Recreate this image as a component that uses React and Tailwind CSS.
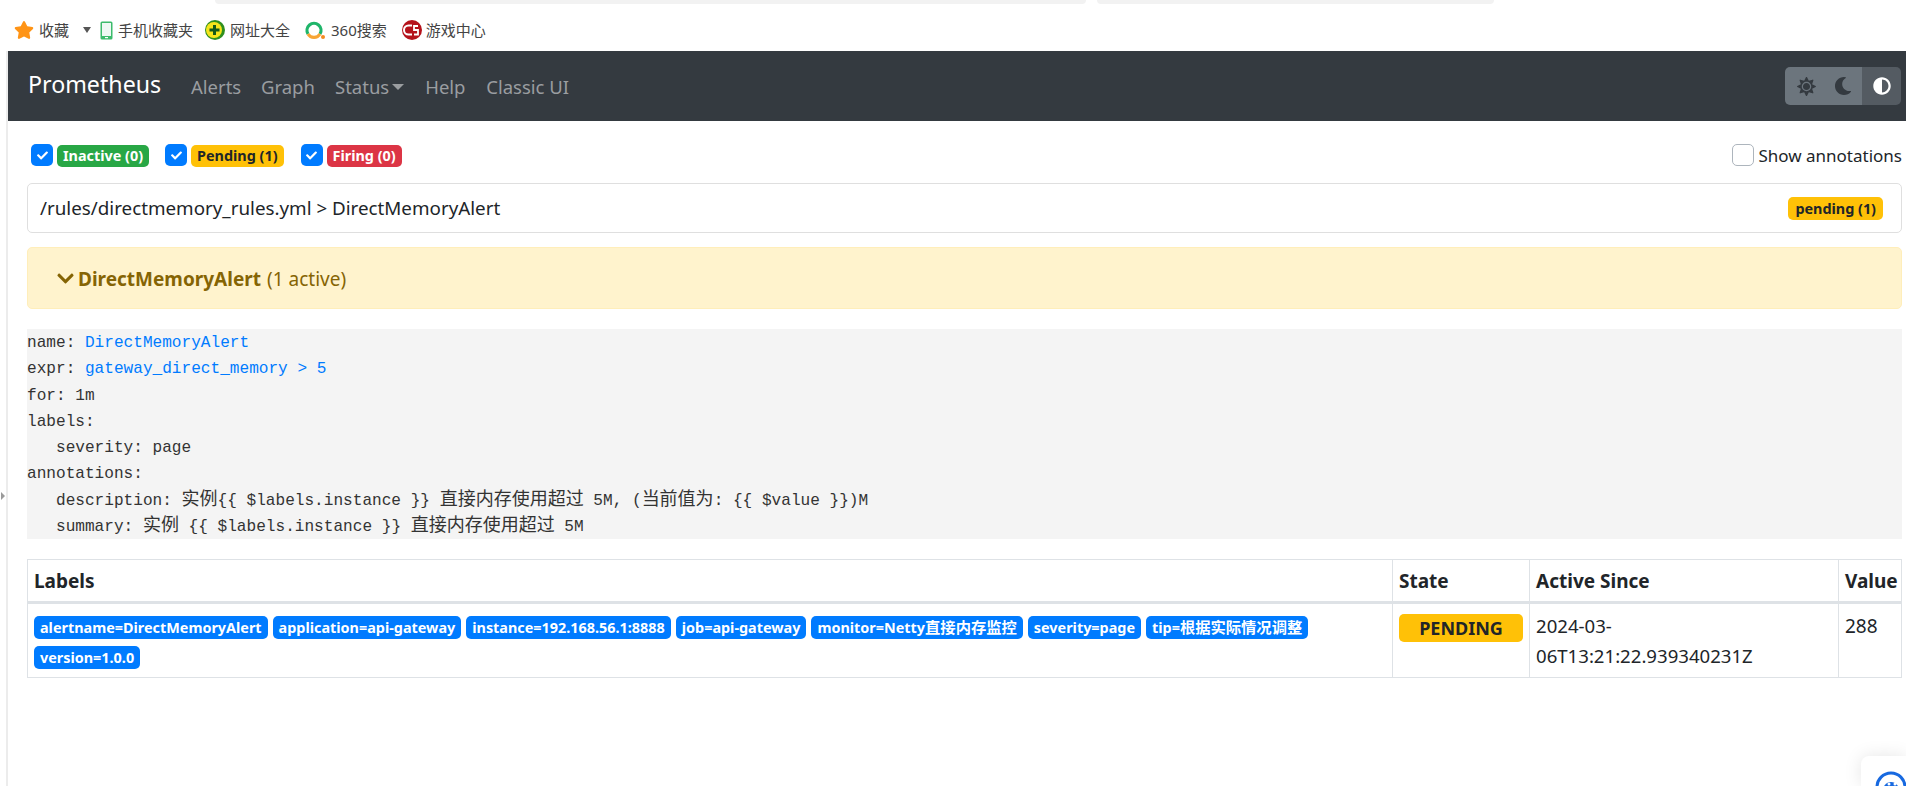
import React from 'react';
import { FaSun, FaMoon, FaAdjust, FaChevronDown, FaStar, FaCheck } from 'react-icons/fa';

const cjk = { fontFamily: '"Noto Sans", "Noto Sans CJK SC", sans-serif' };

const labels = [
  { text: 'alertname=DirectMemoryAlert' },
  { text: 'application=api-gateway' },
  { text: 'instance=192.168.56.1:8888' },
  { text: 'job=api-gateway' },
  { text: 'monitor=Netty', zh: '直接内存监控' },
  { text: 'severity=page' },
  { text: 'tip=', zh: '根据实际情况调整' },
  { text: 'version=1.0.0' },
];

function Zh({ children }) {
  return <span className="text-[18px] leading-[0] font-['Noto_Sans_CJK_SC']">{children}</span>;
}

function Bookmark({ icon, text, className }) {
  return (
    <div className={`flex items-center ${className}`}>
      {icon}
      <span className="text-[15px] text-[#444] leading-none">{text}</span>
    </div>
  );
}

function FilterCheck({ badgeClass, text, className }) {
  return (
    <div className={`flex items-start ${className}`}>
      <span className="w-[22px] h-[22px] rounded-[5px] bg-[#007bff] flex items-center justify-center text-white">
        <FaCheck className="w-[11px] h-[11px]" />
      </span>
      <span className={`ml-[4px] mt-[1px] h-[22px] px-[6px] rounded-[5px] text-[14.400px] font-bold leading-[22px] ${badgeClass}`}>{text}</span>
    </div>
  );
}

export default function App() {
  return (
    <div className="h-[786px] overflow-hidden bg-white flex flex-col text-[#212529] relative" style={cjk}>
      {/* browser chrome */}
      <div className="h-[51px] shrink-0 relative">
        <div className="flex h-[4px]">
          <div className="ml-[215px] w-[871px] bg-[#f2f2f2] rounded-b-[6px]" />
          <div className="ml-[11px] w-[397px] bg-[#f2f2f2] rounded-b-[6px]" />
        </div>
        <div className="flex items-center h-[22px] mt-[15px]">
          <Bookmark
            className="ml-[14px] w-[69px]"
            icon={<FaStar className="w-[20px] h-[20px] text-[#ff9416] mr-[5px]" />}
            text="收藏"
          />
          <div className="w-0 h-0 border-x-[4px] border-x-transparent border-t-[6px] border-t-[#555]" />
          <Bookmark
            className="ml-[9px]"
            icon={
              <svg width="13" height="19" viewBox="0 0 13 19" className="mr-[5px]">
                <rect x="0.5" y="0.5" width="12" height="18" rx="1.5" fill="#3dbb6c" />
                <rect x="2" y="2" width="9" height="13" fill="#eef8f3" />
                <rect x="5" y="16" width="3" height="1.2" fill="#fff" />
              </svg>
            }
            text="手机收藏夹"
          />
          <Bookmark
            className="ml-[12px]"
            icon={
              <svg width="20" height="20" viewBox="0 0 20 20" className="mr-[5px]">
                <circle cx="10" cy="10" r="10" fill="#2f8f1f" />
                <circle cx="9" cy="10" r="8" fill="#f5e51b" />
                <path d="M8 5h3v3.500h3.500v3H11V15H8v-3.500H4.500v-3H8z" fill="#12591a" />
              </svg>
            }
            text="网址大全"
          />
          <Bookmark
            className="ml-[15px]"
            icon={
              <svg width="20" height="20" viewBox="0 0 20 20" className="mr-[6px]">
                <path d="M3 14a7 7 0 1 1 12 0" fill="none" stroke="#1fb56a" strokeWidth="3.200" />
                <path d="M3 14a7 7 0 0 0 12 0" fill="none" stroke="#f7a534" strokeWidth="3.200" />
                <circle cx="18" cy="17" r="2" fill="#f58a1f" />
              </svg>
            }
            text="360搜索"
          />
          <Bookmark
            className="ml-[15px]"
            icon={
              <svg width="20" height="20" viewBox="0 0 20 20" className="mr-[4px]">
                <circle cx="10" cy="10" r="10" fill="#b5121b" />
                <path d="M10 5.500H6.500a4.500 4.500 0 0 0 0 9H10" fill="none" stroke="#fff" strokeWidth="2" />
                <path d="M16 6h-4v4h4v4.500h-4" fill="none" stroke="#fff" strokeWidth="1.800" />
              </svg>
            }
            text="游戏中心"
          />
        </div>
      </div>

      <div className="flex-1 ml-[6px] border-l-2 border-[#ececec] flex flex-col min-h-0">
        {/* navbar */}
        <nav className="h-[70px] shrink-0 bg-[#343a40] flex items-center pl-[20px] pr-[5px]">
          <span className="text-[23.200px] text-white w-[163px] -mt-[3px]">Prometheus</span>
          <div className="flex items-center text-[18.500px] text-[#9a9da0] mt-[1px]">
            <span className="w-[70px]">Alerts</span>
            <span className="w-[74px]">Graph</span>
            <span>Status</span>
            <span className="ml-[3px] w-0 h-0 border-x-[6px] border-x-transparent border-t-[6px] border-t-[#9a9da0]" />
            <span className="ml-[21px] w-[61px]">Help</span>
            <span>Classic UI</span>
          </div>
          <div className="ml-auto flex h-[38px] rounded-[5px] overflow-hidden">
            <div className="w-[77px] bg-[#6c757d] flex items-center text-[#343a40]">
              <FaSun className="ml-[12px] w-[19px] h-[19px]" />
              <FaMoon className="ml-[18px] w-[18px] h-[18px]" />
            </div>
            <div className="w-[39px] bg-[#545b62] flex items-center justify-center text-white">
              <FaAdjust className="w-[18px] h-[18px]" />
            </div>
          </div>
        </nav>

        <main className="pl-[19px] pr-[4px]">
          {/* filters */}
          <div className="flex items-start h-[23px] mt-[23px]">
            <FilterCheck className="ml-[4px]" badgeClass="bg-[#28a745] text-white" text="Inactive (0)" />
            <FilterCheck className="ml-[16px]" badgeClass="bg-[#ffc107] text-[#212529]" text="Pending (1)" />
            <FilterCheck className="ml-[17px]" badgeClass="bg-[#dc3545] text-white" text="Firing (0)" />
            <div className="ml-auto flex items-start">
              <span className="w-[22px] h-[22px] rounded-[5px] border border-[#adb5bd] bg-white" />
              <span className="ml-[4px] text-[17px] leading-[24px]">Show annotations</span>
            </div>
          </div>

          {/* group header */}
          <div className="mt-[16px] h-[50px] border border-[#dfdfdf] rounded-[5px] flex items-center pl-[12px] pr-[18px]">
            <span className="text-[18.800px]">/rules/directmemory_rules.yml &gt; DirectMemoryAlert</span>
            <span className="ml-auto h-[23px] px-[7px] rounded-[5px] bg-[#ffc107] text-[14.400px] font-bold leading-[23px]">pending (1)</span>
          </div>

          {/* alert row */}
          <div className="mt-[14px] h-[62px] rounded-[5px] bg-[#fff3cd] border border-[#ffeeba] flex items-center pl-[28px] text-[#856404]">
            <FaChevronDown className="w-[19px] h-[19px]" />
            <span className="ml-[3px] mt-[2px] text-[19px] font-bold">DirectMemoryAlert</span>
            <span className="ml-[6px] mt-[2px] text-[19px]">(1 active)</span>
          </div>

          {/* rule */}
          <pre className="mt-[20px] h-[210px] pt-[1px] bg-[#f4f4f4] font-['Liberation_Mono'] text-[16.100px] leading-[26.250px] text-[#333] overflow-hidden">
            <code className="block">
              <div className="h-[26.250px]">name: <span className="text-[#007bff]">DirectMemoryAlert</span></div>
              <div className="h-[26.250px]">expr: <span className="text-[#007bff]">gateway_direct_memory &gt; 5</span></div>
              <div className="h-[26.250px]">for: 1m</div>
              <div className="h-[26.250px]">labels:</div>
              <div className="h-[26.250px]">   severity: page</div>
              <div className="h-[26.250px]">annotations:</div>
              <div className="h-[26.250px]">   description: <Zh>实例</Zh>{'{{ $labels.instance }} '}<Zh>直接内存使用超过</Zh>{' 5M, ('}<Zh>当前值为</Zh>{': {{ $value }})M'}</div>
              <div className="h-[26.250px]">   summary: <Zh>实例</Zh>{' {{ $labels.instance }} '}<Zh>直接内存使用超过</Zh>{' 5M'}</div>
            </code>
          </pre>

          {/* alerts table */}
          <table className="mt-[20px] w-full table-fixed border-collapse text-[19px]">
            <colgroup>
              <col className="w-[1365px]" />
              <col className="w-[137px]" />
              <col className="w-[309px]" />
              <col />
            </colgroup>
            <thead>
              <tr className="h-[43px]">
                <th className="border border-b-[3px] border-[#dee2e6] px-[6px] pt-[2px] text-left">Labels</th>
                <th className="border border-b-[3px] border-[#dee2e6] px-[6px] pt-[2px] text-left">State</th>
                <th className="border border-b-[3px] border-[#dee2e6] px-[6px] pt-[2px] text-left">Active Since</th>
                <th className="border border-b-[3px] border-[#dee2e6] px-[6px] pt-[2px] text-left">Value</th>
              </tr>
            </thead>
            <tbody>
              <tr>
                <td className="border border-[#dee2e6] pl-[6px] pr-[6px] pt-[12px] pb-[5px] align-top">
                  <div className="flex flex-wrap gap-x-[5px] gap-y-[7px]">
                    {labels.map((l) => (
                      <span key={l.text} className="h-[23px] px-[6px] rounded-[5px] bg-[#007bff] text-white text-[14.400px] font-bold leading-[23px] whitespace-nowrap">
                        {l.text}
                        {l.zh && <span className="text-[15.300px]">{l.zh}</span>}
                      </span>
                    ))}
                  </div>
                </td>
                <td className="border border-[#dee2e6] px-[6px] pt-[10px] align-top">
                  <div className="h-[28px] rounded-[5px] bg-[#ffc107] text-center text-[18px] font-bold leading-[28px]">PENDING</div>
                </td>
                <td className="border border-[#dee2e6] px-[6px] pt-[7px] pb-[6px] align-top text-[18.600px] leading-[30px]">
                  2024-03-<br />06T13:21:22.939340231Z
                </td>
                <td className="border border-[#dee2e6] px-[6px] pt-[7px] align-top leading-[30px]">288</td>
              </tr>
            </tbody>
          </table>
        </main>
      </div>

      {/* floating assistant widget, cut off by the window */}
      <div className="absolute right-0 bottom-0 w-[45px] h-[30px] bg-white rounded-tl-[8px] shadow-[0_0_18px_rgba(0,0,0,0.1)] overflow-hidden">
        <svg width="36" height="36" viewBox="0 0 36 36" className="ml-[14px] mt-[15px]">
          <circle cx="16" cy="16" r="14" fill="none" stroke="#1769e0" strokeWidth="3" />
          <path d="M7 22a9 11 0 0 1 18 0z" fill="#1769e0" />
          <circle cx="14" cy="13" r="1.500" fill="#fff" />
          <circle cx="20" cy="13" r="1.500" fill="#fff" />
        </svg>
      </div>

      {/* sidebar collapse handle */}
      <div className="absolute left-[1px] top-[492px] w-0 h-0 border-y-[4px] border-y-transparent border-l-[4px] border-l-[#9a9a9a]" />
    </div>
  );
}
